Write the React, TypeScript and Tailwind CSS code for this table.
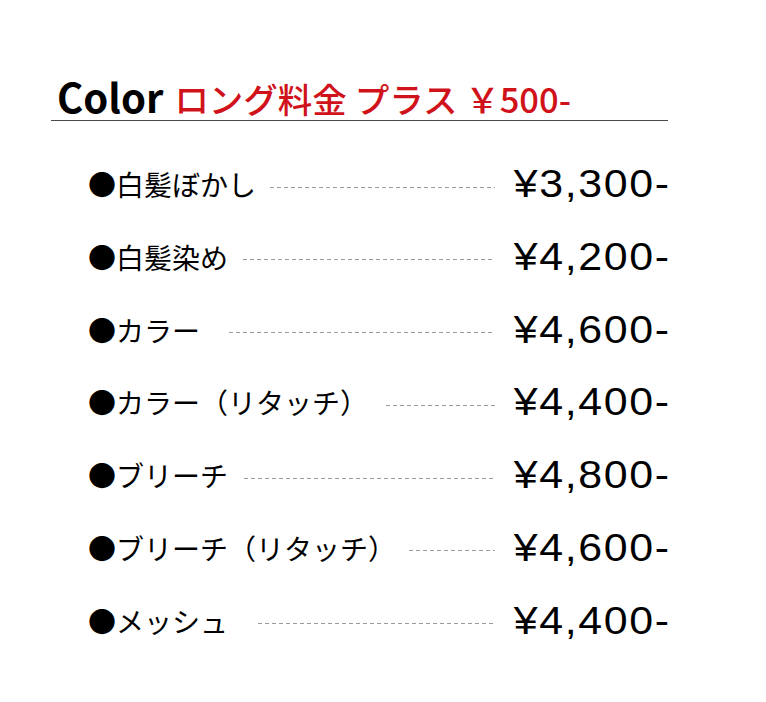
import React from "react";

const items: { label: string; price: string; ml: number }[] = [
  { label: "●白髪ぼかし", price: "¥3,300-", ml: 14 },
  { label: "●白髪染め", price: "¥4,200-", ml: 15 },
  { label: "●カラー", price: "¥4,600-", ml: 29 },
  { label: "●カラー（リタッチ）", price: "¥4,400-", ml: 18 },
  { label: "●ブリーチ", price: "¥4,800-", ml: 16 },
  { label: "●ブリーチ（リタッチ）", price: "¥4,600-", ml: 13 },
  { label: "●メッシュ", price: "¥4,400-", ml: 30 },
];

const jp = { fontFamily: '"Noto Sans CJK JP", "Noto Sans", sans-serif' };
const price = { fontFamily: '"Liberation Sans", "Noto Sans CJK JP", sans-serif' };

export default function App() {
  return (
    <div className="w-[766px] h-[702px] bg-white text-black">
      <div className="pt-[72px] pl-[57px] flex items-baseline h-[120px]" style={jp}>
        <span className="text-[40px] font-bold leading-[48px]">Color</span>
        <span className="ml-[11px] text-[34.5px] leading-[48px] font-medium text-[#d0121b] whitespace-nowrap">
          ロング料金 プラス ￥500-
        </span>
      </div>
      <div className="ml-[51px] w-[617px] h-px bg-[#4a4a4a]" />
      <div className="mt-[43px] ml-[88px] w-[580px] flex flex-col gap-[32.8px]">
        {items.map((it) => (
          <div key={it.label} className="flex items-center h-[40px]">
            <span className="text-[28px] leading-[40px] whitespace-nowrap" style={jp}>
              {it.label}
            </span>
            <div
              className="flex-1 h-px mt-[6px] bg-[repeating-linear-gradient(90deg,#9a9a9a_0px,#9a9a9a_4px,transparent_4px,transparent_7px)]"
              style={{ marginLeft: it.ml }}
            />
            <div className="w-[176px] shrink-0 -mr-[3px] text-right">
              <span
                className="inline-block origin-right scale-x-[1.1] text-[39px] leading-[40px] tracking-[1.5px] whitespace-nowrap"
                style={price}
              >
                {it.price}
              </span>
            </div>
          </div>
        ))}
      </div>
    </div>
  );
}
